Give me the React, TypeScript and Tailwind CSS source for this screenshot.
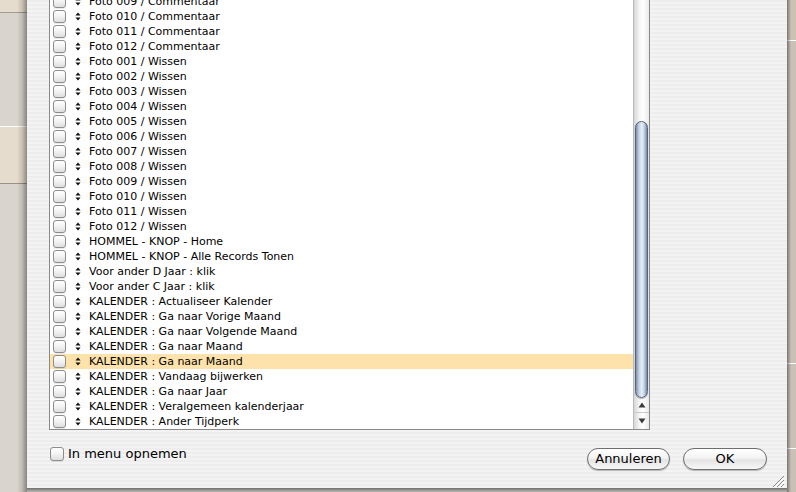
import React from "react";

const rows: string[] = [
  "Foto 009 / Commentaar",
  "Foto 010 / Commentaar",
  "Foto 011 / Commentaar",
  "Foto 012 / Commentaar",
  "Foto 001 / Wissen",
  "Foto 002 / Wissen",
  "Foto 003 / Wissen",
  "Foto 004 / Wissen",
  "Foto 005 / Wissen",
  "Foto 006 / Wissen",
  "Foto 007 / Wissen",
  "Foto 008 / Wissen",
  "Foto 009 / Wissen",
  "Foto 010 / Wissen",
  "Foto 011 / Wissen",
  "Foto 012 / Wissen",
  "HOMMEL - KNOP - Home",
  "HOMMEL - KNOP - Alle Records Tonen",
  "Voor ander D Jaar : klik",
  "Voor ander C Jaar : klik",
  "KALENDER : Actualiseer Kalender",
  "KALENDER : Ga naar Vorige Maand",
  "KALENDER : Ga naar Volgende Maand",
  "KALENDER : Ga naar Maand",
  "KALENDER : Ga naar Maand",
  "KALENDER : Vandaag bijwerken",
  "KALENDER : Ga naar Jaar",
  "KALENDER : Veralgemeen kalenderjaar",
  "KALENDER : Ander Tijdperk",
];

function Check({ size = 13 }: { size?: number }) {
  return (
    <div
      className={
        (size === 13 ? "w-[13px] h-[13px] " : "w-[14px] h-[14px] ") +
        "shrink-0 rounded-[3px] border border-[#8d8d8d] bg-[linear-gradient(to_bottom,#ffffff,#f4f4f4_45%,#dedede)] shadow-[0_1px_0_rgba(0,0,0,0.08)]"
      }
    />
  );
}

function Arrows() {
  return (
    <svg width="6" height="9" viewBox="0 0 6 9" className="shrink-0">
      <path d="M3 0.5L5.6 3.6H0.4Z M3 8.5L0.4 5.4H5.6Z" fill="#111" />
    </svg>
  );
}

function Button({ label, w }: { label: string; w: string }) {
  return (
    <div
      className={
        w +
        " h-[22px] rounded-full border border-[#6e6e6e] bg-[linear-gradient(to_bottom,#ffffff,#f3f3f3_45%,#e4e4e4_55%,#f7f7f7)] shadow-[0_1px_1px_rgba(0,0,0,0.25)] flex items-center justify-center text-[13px] text-black"
      }
    >
      {label}
    </div>
  );
}

export default function App() {
  return (
    <div
      className="w-[796px] h-[492px] overflow-hidden flex bg-[#d8d2cc]"
      style={{ fontFamily: '"DejaVu Sans", "Liberation Sans", sans-serif' }}
    >
      {/* left desktop strip */}
      <div className="relative w-[27px] h-full flex flex-col shrink-0">
        <div className="h-[12px] bg-[#e6dccd]" />
        <div className="h-[1px] bg-[#a39a90]" />
        <div className="h-[113px] bg-[#dad4ce]" />
        <div className="h-[1px] bg-[#ffffff]" />
        <div className="h-[56px] bg-[#e6dccd]" />
        <div className="h-[1px] bg-[#9a9188]" />
        <div className="flex-1 bg-[#dad4ce]" />
        <div className="absolute top-0 right-0 w-[10px] h-full bg-[linear-gradient(to_right,rgba(0,0,0,0),rgba(0,0,0,0.12)_50%,rgba(0,0,0,0.38))]" />
      </div>

      {/* dialog column */}
      <div className="w-[760px] h-full flex flex-col shrink-0">
        <div className="relative h-[488px] flex flex-col bg-[repeating-linear-gradient(to_bottom,#ededed_0px,#ededed_2px,#f3f3f3_2px,#f3f3f3_4px)]">
          {/* list box */}
          <div className="ml-[22px] w-[601px] h-[430px] flex border-l border-r border-b border-[#8a8a8a] bg-white shadow-[inset_1px_0_0_#cfcfcf]">
            <div className="w-[583px] h-full overflow-hidden">
              <div className="-mt-[6px] flex flex-col">
                {rows.map((r, i) => (
                  <div
                    key={i}
                    className={
                      "h-[15px] flex items-center pl-[3px] " +
                      (i === 24 ? "bg-[#fde2ab]" : "bg-white")
                    }
                  >
                    <Check />
                    <div className="ml-[9px]">
                      <Arrows />
                    </div>
                    <span className="ml-[8px] text-[11px] leading-[15px] text-black whitespace-nowrap">
                      {r}
                    </span>
                  </div>
                ))}
              </div>
            </div>
            {/* scrollbar */}
            <div className="w-[16px] h-full flex flex-col border-l border-[#b9b9b9] bg-[linear-gradient(to_right,#d6d6d6,#f4f4f4_35%,#ffffff_60%,#e9e9e9)]">
              <div className="h-[121px]" />
              <div className="mx-[1px] h-[277px] rounded-full border border-[#53647c] bg-[linear-gradient(to_right,#7d92ad,#c9d6e6_30%,#e9eff7_55%,#b4c4d8_80%,#6f86a4)] shadow-[0_1px_1px_rgba(0,0,0,0.3)]" />
              <div className="flex-1 flex flex-col items-center">
                <div className="h-[15px] w-full flex items-center justify-center border-b border-[#c8c8c8]">
                  <svg width="8" height="6" viewBox="0 0 8 6">
                    <path d="M4 0.5L7.5 5.5H0.5Z" fill="#3c3c3c" />
                  </svg>
                </div>
                <div className="h-[15px] w-full flex items-center justify-center">
                  <svg width="8" height="6" viewBox="0 0 8 6">
                    <path d="M4 5.5L0.5 0.5H7.5Z" fill="#3c3c3c" />
                  </svg>
                </div>
              </div>
            </div>
          </div>

          {/* bottom controls */}
          <div className="flex items-start pt-[17px] pl-[23px] pr-[20px]">
            <div className="flex items-center">
              <Check size={14} />
              <span className="ml-[4px] text-[13px] leading-[14px] text-black">
                In menu opnemen
              </span>
            </div>
            <div className="ml-auto mt-[1px] flex gap-[13px]">
              <Button label="Annuleren" w="w-[83px]" />
              <Button label="OK" w="w-[84px]" />
            </div>
          </div>

          {/* resize grip */}
          <svg
            className="absolute right-[2px] bottom-[1px]"
            width="14"
            height="13"
            viewBox="0 0 14 13"
          >
            <path d="M13 2L2 13 M13 6L6 13 M13 10L10 13" stroke="#8a8a8a" strokeWidth="1" />
            <path d="M14 3L3 14 M14 7L7 14 M14 11L11 14" stroke="#ffffff" strokeWidth="1" />
          </svg>
        </div>
        <div className="flex-1 bg-[linear-gradient(to_bottom,#6f6f6f,#bdb8b3)]" />
      </div>

      {/* right desktop strip */}
      <div className="relative flex-1 h-full flex flex-col">
        <div className="h-[40px] bg-[#cbc2b4]" />
        <div className="h-[1px] bg-[#ffffff]" />
        <div className="h-[322px] bg-[#c9c1b6]" />
        <div className="h-[1px] bg-[#ffffff]" />
        <div className="h-[84px] bg-[#c9c1b6]" />
        <div className="h-[1px] bg-[#ffffff]" />
        <div className="flex-1 bg-[#c9c1b6]" />
        <div className="absolute top-0 left-0 w-[4px] h-full bg-[linear-gradient(to_right,rgba(0,0,0,0.4),rgba(0,0,0,0))]" />
      </div>
    </div>
  );
}
